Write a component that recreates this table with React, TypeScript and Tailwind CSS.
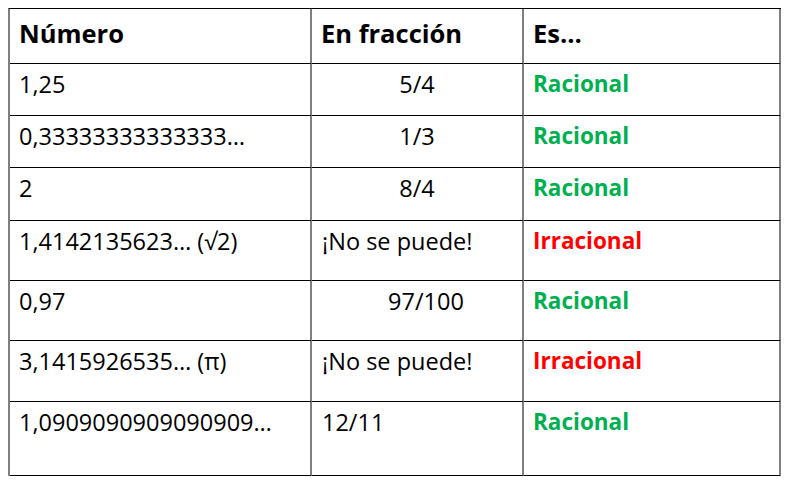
import React from 'react'

type Row = {
    numero: string
    fraccion: string
    fraccionAlign: 'center' | 'left'
    es: 'Racional' | 'Irracional'
    height: string
}

const rows: Row[] = [
    { numero: '1,25', fraccion: '5/4', fraccionAlign: 'center', es: 'Racional', height: 'h-[52px]' },
    { numero: '0,33333333333333…', fraccion: '1/3', fraccionAlign: 'center', es: 'Racional', height: 'h-[52px]' },
    { numero: '2', fraccion: '8/4', fraccionAlign: 'center', es: 'Racional', height: 'h-[53px]' },
    { numero: '1,4142135623… (√2)', fraccion: '¡No se puede!', fraccionAlign: 'left', es: 'Irracional', height: 'h-[60px]' },
    { numero: '0,97', fraccion: '97/100', fraccionAlign: 'center', es: 'Racional', height: 'h-[60px]' },
    { numero: '3,1415926535… (π)', fraccion: '¡No se puede!', fraccionAlign: 'left', es: 'Irracional', height: 'h-[61px]' },
    { numero: '1,0909090909090909…', fraccion: '12/11', fraccionAlign: 'left', es: 'Racional', height: 'h-[74px]' },
]

const cell = 'border-b border-black border-r-2 border-r-[#808080] leading-none'

export default function App() {
    return (
        <div className="w-[788px] h-[483px] bg-white pt-[8px] pl-[8px] font-['Open_Sans',sans-serif] text-black">
            <div className="grid grid-cols-[302px_212px_257px] w-[773px] border-t border-black border-l-2 border-l-[#808080]">
                {/* header */}
                <div className={`${cell} h-[55px] pt-[12px] pl-[9px] text-[25.5px] font-bold`}>Número</div>
                <div className={`${cell} h-[55px] pt-[12px] pl-[9px] text-[25.5px] font-bold`}>En fracción</div>
                <div className={`${cell} h-[55px] pt-[12px] pl-[9px] text-[25.5px] font-bold`}>Es…</div>

                {rows.map((r, i) => (
                    <React.Fragment key={i}>
                        <div className={`${cell} ${r.height} pt-[9px] pl-[9px] text-[23.5px]`}>{r.numero}</div>
                        <div
                            className={`${cell} ${r.height} pt-[9px] text-[23.5px] ${
                                r.fraccionAlign === 'center'
                                    ? r.fraccion === '97/100'
                                        ? 'text-center pl-[18px]'
                                        : 'text-center'
                                    : 'pl-[10px]'
                            }`}
                        >
                            {r.fraccion}
                        </div>
                        <div
                            className={`${cell} ${r.height} pt-[9px] pl-[9px] text-[22.5px] font-bold ${
                                r.es === 'Racional' ? 'text-[#00b050]' : 'text-[#ff0000]'
                            }`}
                        >
                            {r.es}
                        </div>
                    </React.Fragment>
                ))}
            </div>
        </div>
    )
}
